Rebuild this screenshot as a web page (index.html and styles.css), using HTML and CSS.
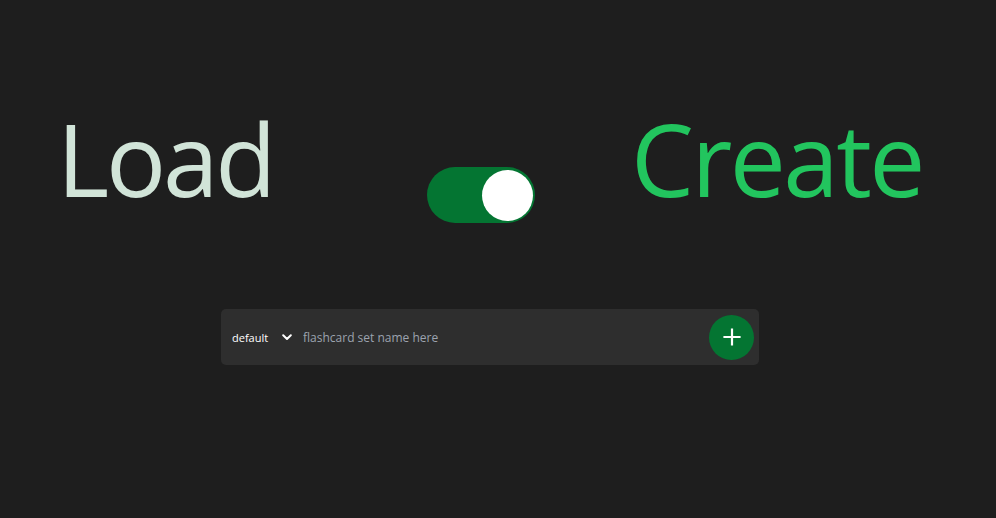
FILE: index.html
```html
<!DOCTYPE html>
<html lang="en">
<head>
<meta charset="utf-8">
<title>Flashcards</title>
<link rel="stylesheet" href="styles.css">
</head>
<body>
<main class="page">
  <section class="mode-row">
    <h1 class="mode mode-load">Load</h1>
    <div class="toggle" role="switch" aria-checked="true"><span class="knob"></span></div>
    <h1 class="mode mode-create">Create</h1>
  </section>
  <form class="bar">
    <div class="select-wrap">
      <select class="set-select"><option>default</option></select>
      <svg class="chev" width="10" height="7" viewBox="0 0 10 7"><path d="M1.2 1.3 L5 5 L8.8 1.3" fill="none" stroke="#fff" stroke-width="2" stroke-linecap="round" stroke-linejoin="round"/></svg>
    </div>
    <input class="name-input" type="text" placeholder="flashcard set name here">
    <button class="add-btn" type="button" aria-label="Add">
      <svg width="18" height="18" viewBox="0 0 18 18"><path d="M9 1.5 V16.5 M1.5 9 H16.5" stroke="#fff" stroke-width="2.2" stroke-linecap="square"/></svg>
    </button>
  </form>
</main>
</body>
</html>
```
FILE: styles.css
```css
* { box-sizing: border-box; }
html, body {
  margin: 0;
  padding: 0;
  background: #1e1e1e;
  font-family: "Open Sans", "Noto Sans", sans-serif;
}
.page {
  width: 996px;
  height: 518px;
  display: flex;
  flex-direction: column;
  align-items: center;
  padding-top: 87px;
}
.mode-row {
  width: 100%;
  display: grid;
  grid-template-columns: 370px 108px 1fr;
  align-items: end;
  padding-left: 57px;
}
.mode {
  margin: 0;
  font-weight: 400;
  font-size: 100px;
  line-height: 142px;
  letter-spacing: -3.2px;
  white-space: nowrap;
}
.mode-load { color: #d1e4d8; }
.mode-create { color: #22c55e; margin-left: 96px; letter-spacing: -2.6px; }
.toggle {
  width: 108px;
  height: 56px;
  border-radius: 28px;
  background: #047532;
  display: flex;
  align-items: center;
  justify-content: flex-end;
  padding: 0 2px;
  margin-bottom: 6px;
}
.knob {
  width: 51px;
  height: 51px;
  border-radius: 50%;
  background: #ffffff;
}
.bar {
  margin-top: 80px;
  width: 538px;
  height: 56px;
  background: #2e2e2e;
  border-radius: 5px;
  display: flex;
  align-items: center;
  padding: 0 5px 0 11px;
  margin-left: -16px;
}
.select-wrap {
  display: flex;
  align-items: center;
}
.set-select {
  appearance: none;
  -webkit-appearance: none;
  background: transparent;
  border: none;
  color: #ffffff;
  font-family: "Open Sans", "Noto Sans", sans-serif;
  font-size: 11px;
  padding: 0;
  width: 50px;
  outline: none;
}
.name-input {
  flex: 1;
  background: transparent;
  border: none;
  outline: none;
  margin-left: 11px;
  font-family: "Open Sans", "Noto Sans", sans-serif;
  font-size: 12px;
  color: #e5e7eb;
  padding: 0;
}
.name-input::placeholder { color: #9ca3af; }
.add-btn {
  width: 45px;
  height: 45px;
  border-radius: 50%;
  background: #047532;
  border: none;
  display: flex;
  align-items: center;
  justify-content: center;
  padding: 0;
}
```
